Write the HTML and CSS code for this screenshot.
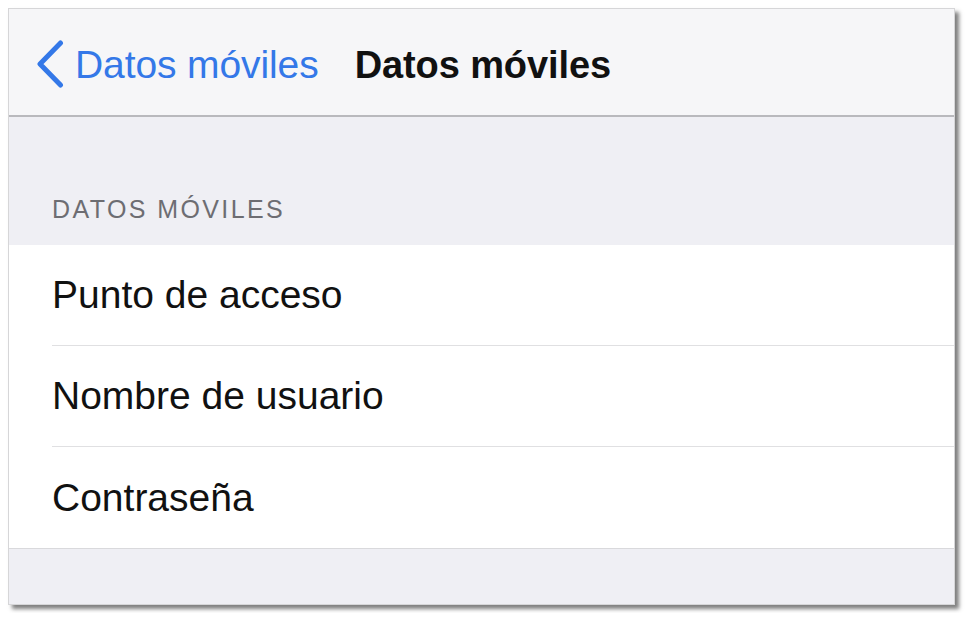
FILE: index.html
```html
<!DOCTYPE html>
<html lang="es">
<head>
<meta charset="utf-8">
<title>Datos móviles</title>
<link rel="stylesheet" href="styles.css">
</head>
<body>
<div class="frame">
  <header class="nav">
    <a class="back">
      <svg class="chevron" width="28" height="48" viewBox="0 0 28 48">
        <polyline points="24.5,3 4,24 24.5,45" fill="none" stroke="#3478e8" stroke-width="5" stroke-linecap="round" stroke-linejoin="round"/>
      </svg>
      <span class="back-label">Datos móviles</span>
    </a>
    <h1 class="title">Datos móviles</h1>
  </header>
  <div class="section-head">DATOS MÓVILES</div>
  <ul class="list">
    <li class="row"><div class="row-inner">Punto de acceso</div></li>
    <li class="row"><div class="row-inner">Nombre de usuario</div></li>
    <li class="row"><div class="row-inner">Contraseña</div></li>
  </ul>
</div>
</body>
</html>
```
FILE: styles.css
```css
html, body {
  margin: 0;
  padding: 0;
  background: #ffffff;
}
body {
  padding: 8px;
  font-family: "Liberation Sans", Arial, sans-serif;
}
.frame {
  width: 947px;
  height: 597px;
  box-sizing: border-box;
  border: 1px solid #d6d6d8;
  background: #efeff4;
  box-shadow: 4px 4px 4px rgba(0, 0, 0, 0.5);
  display: flex;
  flex-direction: column;
  overflow: hidden;
}
.nav {
  flex: none;
  background: #f6f6f8;
  border-bottom: 2px solid #b9b9bd;
  display: flex;
  align-items: center;
  padding: 6px 0 0 27px;
  box-sizing: content-box;
  height: 100px;
}
.back {
  display: flex;
  align-items: center;
  color: #3478e8;
}
.chevron {
  display: block;
  margin-top: -2px;
}
.back-label {
  font-size: 39px;
  margin-left: 11px;
  letter-spacing: -0.1px;
}
.title {
  margin: 0 0 0 36px;
  font-size: 38px;
  font-weight: bold;
  letter-spacing: -0.1px;
  color: #111111;
}
.section-head {
  height: 128px;
  flex: none;
  box-sizing: border-box;
  display: flex;
  align-items: flex-end;
  padding: 0 0 21px 43px;
  font-size: 25px;
  letter-spacing: 2.4px;
  color: #6d6d72;
}
.list {
  list-style: none;
  margin: 0;
  padding: 0;
  background: #ffffff;
  border-bottom: 1px solid #d9d9dc;
}
.row {
  padding-left: 43px;
}
.row-inner {
  height: 100px;
  border-bottom: 1px solid #e0e0e2;
  display: flex;
  align-items: center;
  font-size: 39px;
  color: #111111;
}
.row:last-child .row-inner {
  border-bottom: none;
  height: 101px;
}
```
